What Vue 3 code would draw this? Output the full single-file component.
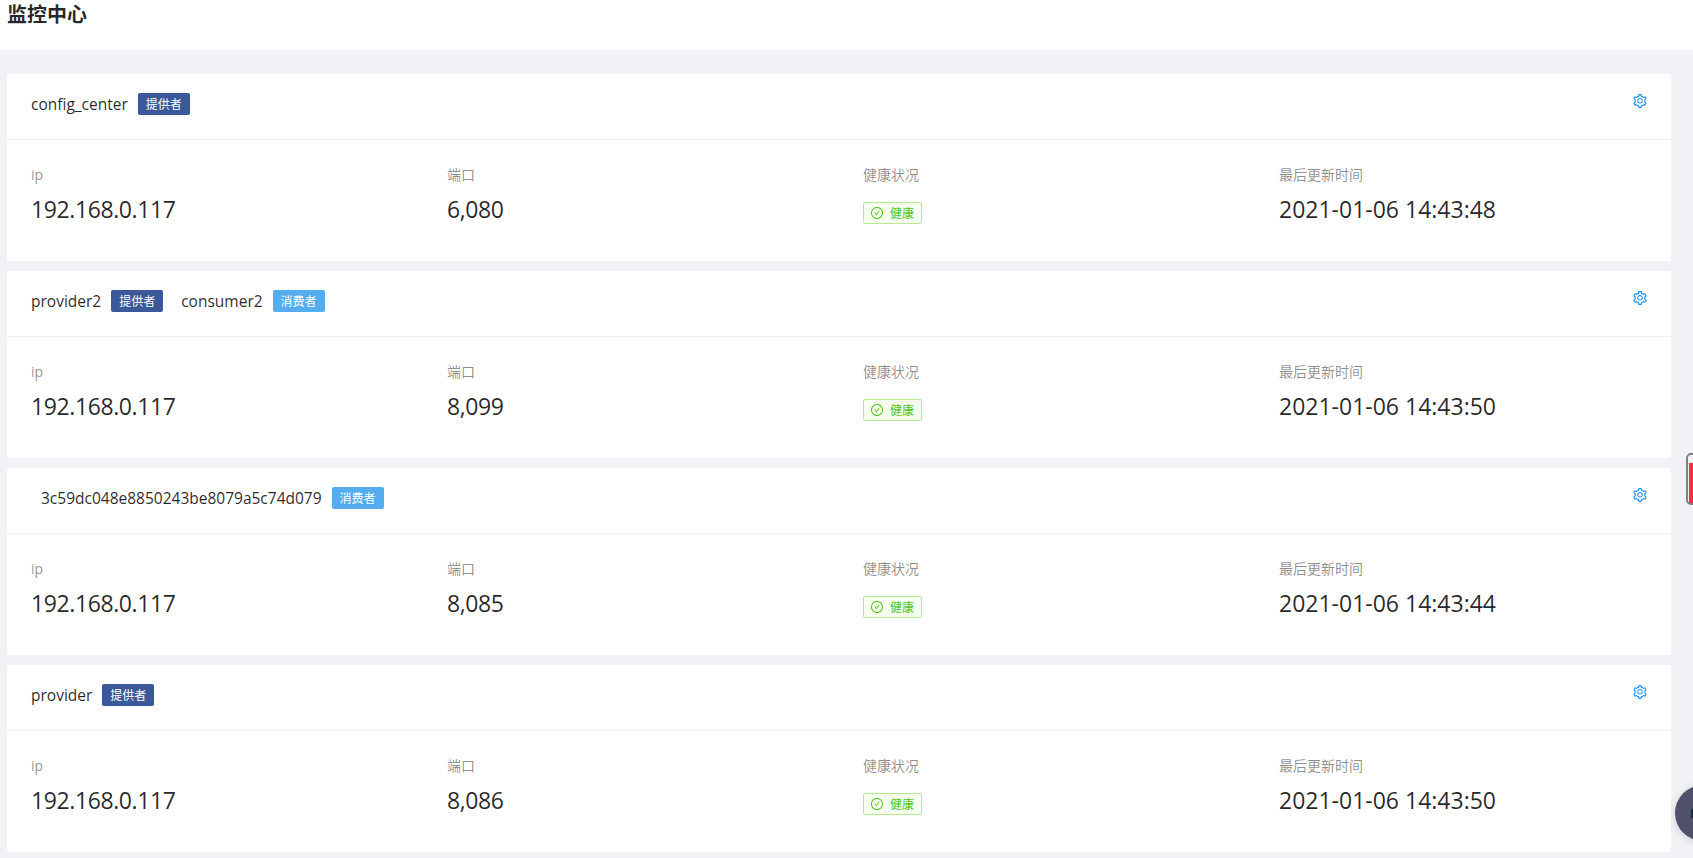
<template>
  <div class="page">
    <header class="page-head">
      <h1>监控中心</h1>
    </header>

    <main class="monitor">
      <section v-for="card in cards" :key="card.time + card.port" class="card">
        <div class="card-head">
          <div class="services">
            <template v-for="service in card.services" :key="service.name">
              <span class="service-name">{{ service.name }}</span>
              <span v-if="service.role" class="role" :class="service.role">{{ roleText[service.role] }}</span>
            </template>
          </div>
          <svg class="gear" viewBox="64 64 896 896" fill="currentColor" aria-hidden="true">
            <path d="M924.8 625.7l-65.5-56c3.1-19 4.7-38.4 4.7-57.8s-1.6-38.8-4.7-57.8l65.5-56a32.03 32.03 0 0 0 9.3-35.2l-.9-2.6a443.74 443.74 0 0 0-79.7-137.9l-1.8-2.1a32.12 32.12 0 0 0-35.1-9.5l-81.3 28.9c-30-24.6-63.5-44-99.7-57.6l-15.7-85a32.05 32.05 0 0 0-25.8-25.7l-2.7-.5c-52.1-9.4-106.9-9.4-159 0l-2.7.5a32.05 32.05 0 0 0-25.8 25.7l-15.8 85.4a351.86 351.86 0 0 0-99 57.4l-81.9-29.1a32 32 0 0 0-35.1 9.5l-1.8 2.1a446.02 446.02 0 0 0-79.7 137.9l-.9 2.6c-4.5 12.5-.8 26.5 9.3 35.2l66.3 56.6c-3.1 18.8-4.6 38-4.6 57.1 0 19.2 1.5 38.4 4.6 57.1L99 625.5a32.03 32.03 0 0 0-9.3 35.2l.9 2.6c18.1 50.4 44.9 96.9 79.7 137.9l1.8 2.1a32.12 32.12 0 0 0 35.1 9.5l81.9-29.1c29.8 24.5 63.1 43.9 99 57.4l15.8 85.4a32.05 32.05 0 0 0 25.8 25.7l2.7.5a449.4 449.4 0 0 0 159 0l2.7-.5a32.05 32.05 0 0 0 25.8-25.7l15.7-85a350 350 0 0 0 99.7-57.6l81.3 28.9a32 32 0 0 0 35.1-9.5l1.8-2.1c34.8-41.1 61.6-87.5 79.7-137.9l.9-2.6c4.5-12.3.8-26.3-9.3-35zM788.3 465.9c2.5 15.1 3.8 30.6 3.8 46.1s-1.3 31-3.8 46.1l-6.6 40.1 74.7 63.9a370.03 370.03 0 0 1-42.6 73.6L721 702.8l-31.4 25.8c-23.9 19.6-50.5 35-79.3 45.8l-38.1 14.3-17.9 97a377.5 377.5 0 0 1-85 0l-17.9-97.2-37.8-14.5c-28.5-10.8-55-26.2-78.7-45.7l-31.4-25.9-93.4 33.2c-17-22.9-31.2-47.6-42.6-73.6l75.5-64.5-6.5-40c-2.4-14.9-3.7-30.3-3.7-45.5 0-15.3 1.2-30.6 3.7-45.5l6.5-40-75.5-64.5c11.3-26.1 25.6-50.7 42.6-73.6l93.4 33.2 31.4-25.9c23.7-19.5 50.2-34.9 78.7-45.7l37.9-14.3 17.9-97.2c28.1-3.2 56.8-3.2 85 0l17.9 97 38.1 14.3c28.7 10.8 55.4 26.2 79.3 45.8l31.4 25.8 92.8-32.9c17 22.9 31.2 47.6 42.6 73.6L781.8 426l6.5 39.9zM512 326c-97.2 0-176 78.8-176 176s78.8 176 176 176 176-78.8 176-176-78.8-176-176-176zm79.2 255.2A111.6 111.6 0 0 1 512 614c-29.9 0-58-11.7-79.2-32.8A111.6 111.6 0 0 1 400 502c0-29.9 11.7-58 32.8-79.2C454 401.6 482.1 390 512 390c29.9 0 58 11.6 79.2 32.8A111.6 111.6 0 0 1 624 502c0 29.9-11.7 58-32.8 79.2z" />
          </svg>
        </div>

        <div class="card-body">
          <div class="stat">
            <div class="stat-title">ip</div>
            <div class="stat-value narrow">{{ card.ip }}</div>
          </div>
          <div class="stat">
            <div class="stat-title">端口</div>
            <div class="stat-value narrow">{{ card.port }}</div>
          </div>
          <div class="stat">
            <div class="stat-title">健康状况</div>
            <div class="health">
              <svg class="health-icon" viewBox="64 64 896 896" fill="currentColor" aria-hidden="true">
                <path d="M699 353h-46.9c-10.2 0-19.9 4.9-25.9 13.3L469 584.3l-71.2-98.8c-6-8.3-15.6-13.3-25.9-13.3H325c-6.5 0-10.3 7.4-6.5 12.7l124.6 172.8a31.8 31.8 0 0 0 51.7 0l210.6-292c3.9-5.3.1-12.7-6.4-12.7z" />
                <path d="M512 64C264.6 64 64 264.6 64 512s200.6 448 448 448 448-200.6 448-448S759.4 64 512 64zm0 820c-205.4 0-372-166.6-372-372s166.6-372 372-372 372 166.6 372 372-166.6 372-372 372z" />
              </svg>
              <span>健康</span>
            </div>
          </div>
          <div class="stat">
            <div class="stat-title">最后更新时间</div>
            <div class="stat-value">{{ card.time }}</div>
          </div>
        </div>
      </section>
    </main>

    <div class="side-handle"><span></span></div>
    <div class="float-btn"></div>
  </div>
</template>

<script setup>
const roleText = {
  provider: '提供者',
  consumer: '消费者',
}

const cards = [
  {
    services: [{ name: 'config_center', role: 'provider' }],
    ip: '192.168.0.117',
    port: '6,080',
    time: '2021-01-06 14:43:48',
  },
  {
    services: [
      { name: 'provider2', role: 'provider' },
      { name: 'consumer2', role: 'consumer' },
    ],
    ip: '192.168.0.117',
    port: '8,099',
    time: '2021-01-06 14:43:50',
  },
  {
    services: [
      { name: '' },
      { name: '3c59dc048e8850243be8079a5c74d079', role: 'consumer' },
    ],
    ip: '192.168.0.117',
    port: '8,085',
    time: '2021-01-06 14:43:44',
  },
  {
    services: [{ name: 'provider', role: 'provider' }],
    ip: '192.168.0.117',
    port: '8,086',
    time: '2021-01-06 14:43:50',
  },
]
</script>

<style>
html,
body {
  margin: 0;
  background: #f0f2f5;
}
</style>

<style scoped>
.page {
  position: relative;
  height: 858px;
  overflow: hidden;
  background: #f0f2f5;
  color: rgba(0, 0, 0, 0.85);
  font-family: "Open Sans", "Noto Sans CJK SC", sans-serif;
  font-size: 14px;
}

.page-head {
  height: 50px;
  padding-left: 7px;
  background: #fff;
}

.page-head h1 {
  margin: 0;
  font-size: 20px;
  line-height: 28px;
  font-weight: 700;
  font-family: "Noto Sans CJK SC", sans-serif;
}

.monitor {
  display: flex;
  flex-direction: column;
  gap: 10px;
  padding: 24px 22px 0 7px;
}

.card {
  height: 187px;
  box-sizing: border-box;
  border-radius: 2px;
  background: #fff;
}

.card-head {
  display: flex;
  justify-content: space-between;
  height: 66px;
  box-sizing: border-box;
  padding: 0 24px;
  border-bottom: 1px solid #f0f0f0;
}

.services {
  display: flex;
  align-items: center;
  height: 60px;
}

.service-name {
  margin-right: 10px;
  font-size: 15.5px;
}

.role {
  width: 52px;
  height: 22px;
  margin-right: 18px;
  border-radius: 2px;
  color: #fff;
  font-size: 12px;
  line-height: 22px;
  text-align: center;
  font-family: "Noto Sans CJK SC", sans-serif;
}

.role.provider {
  background: #3b5998;
}

.role.consumer {
  background: #55acee;
}

.gear {
  width: 14px;
  height: 14px;
  margin-top: 20px;
  color: #1890ff;
}

.card-body {
  display: grid;
  grid-template-columns: repeat(4, 1fr);
  padding-top: 24px;
}

.stat {
  padding-left: 24px;
}

.stat-title {
  margin-bottom: 5px;
  color: rgba(0, 0, 0, 0.45);
  line-height: 22px;
}

.stat-value {
  font-size: 23px;
  line-height: 36px;
}

.stat-value.narrow {
  letter-spacing: -0.4px;
}

.health {
  display: inline-flex;
  align-items: center;
  gap: 7px;
  box-sizing: border-box;
  height: 22px;
  margin-top: 11px;
  padding: 0 7px;
  border: 1px solid #b7eb8f;
  border-radius: 2px;
  background: #f6ffed;
  color: #52c41a;
  font-size: 12px;
}

.health-icon {
  width: 12px;
  height: 12px;
}

.side-handle {
  position: absolute;
  top: 453px;
  left: 1686px;
  box-sizing: border-box;
  width: 20px;
  height: 52px;
  padding: 8px 0 0 1px;
  border: 2px solid #808080;
  border-radius: 5px;
}

.side-handle span {
  display: block;
  height: 100%;
  background: #f5323c;
}

.float-btn {
  position: absolute;
  top: 785px;
  left: 1675px;
  width: 56px;
  height: 56px;
  border-radius: 50%;
  background: #4f5069;
  box-shadow: 0 2px 8px rgba(0, 0, 0, 0.15);
}

.float-btn::after {
  content: "";
  position: absolute;
  top: 24px;
  left: 16px;
  width: 3px;
  height: 9px;
  background: #1d2a44;
}
</style>
